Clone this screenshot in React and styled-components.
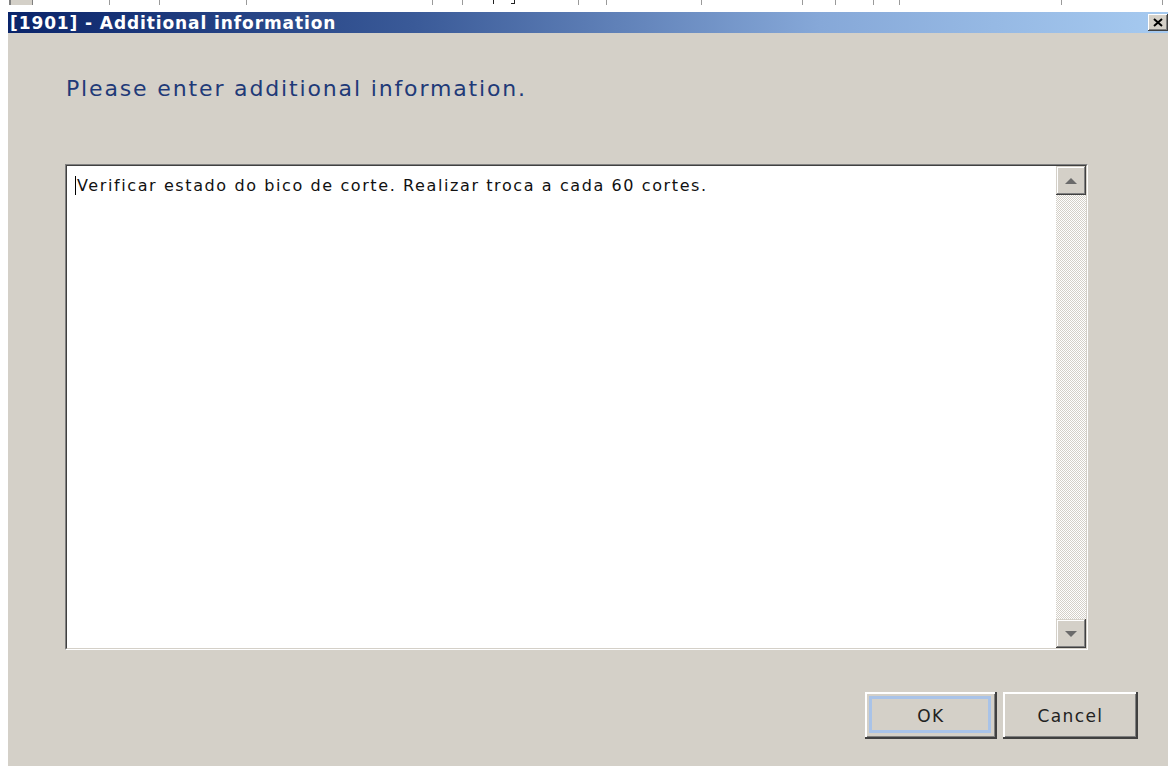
import styled, { createGlobalStyle } from "styled-components";

const GlobalStyle = createGlobalStyle`
  html, body {
    margin: 0;
    padding: 0;
    background: #fff;
    overflow: hidden;
  }
  #root {
    width: 1168px;
    height: 766px;
  }
`;

const Screen = styled.div`
  width: 1168px;
  height: 766px;
  display: flex;
  flex-direction: column;
  background: #fff;
`;

/* strip of the grid behind the dialog */
const GridStrip = styled.div`
  height: 12px;
  flex-shrink: 0;
  display: flex;
`;

const GridCell = styled.div`
  flex: 0 0 ${(p) => p.$w}px;
  height: 5px;
  box-sizing: border-box;
  border-right: ${(p) => (p.$line ? "1px solid #9a9a9a" : "none")};
  display: flex;
  align-items: flex-start;
`;

const GridButton = styled.div`
  flex: 0 0 24px;
  height: 5px;
  box-sizing: border-box;
  background: #d4d0c8;
  border-left: 2px solid #808080;
  border-right: 1px solid #808080;
`;

/* tails of the cell labels peeking out above the dialog */
const Tail = styled.span`
  margin-left: ${(p) => p.$x}px;
  width: ${(p) => p.$w}px;
  height: 4px;
  border-right: 1px solid #222;
  border-bottom: ${(p) => (p.$hook ? "1px solid #222" : "none")};
  box-sizing: border-box;
`;

const Dialog = styled.div`
  flex: 1;
  margin-left: 8px;
  display: flex;
  flex-direction: column;
  background: #d4d0c8;
  min-height: 0;
`;

const TitleBar = styled.div`
  height: 21px;
  flex-shrink: 0;
  display: flex;
  align-items: center;
  justify-content: space-between;
  padding-left: 2px;
  background: linear-gradient(to right, #0a246a 0%, #3a5a98 35%, #86a8d8 70%, #a6caf0 100%);
`;

const Title = styled.span`
  font: bold 17px "DejaVu Sans", sans-serif;
  letter-spacing: 0.9px;
  color: #fff;
  white-space: nowrap;
`;

const CloseButton = styled.div`
  width: 20px;
  height: 17px;
  align-self: flex-start;
  margin-top: 2px;
  background: #d4d0c8;
  box-shadow: inset -1px -1px #404040, inset 1px 1px #fff, inset -2px -2px #808080;
  display: flex;
  align-items: center;
  justify-content: center;
`;

const Body = styled.div`
  flex: 1;
  display: flex;
  flex-direction: column;
  padding: 43px 30px 0 57px;
`;

const Prompt = styled.div`
  margin-left: 1px;
  font: 22px/26px "DejaVu Sans", sans-serif;
  color: #1f3a78;
  letter-spacing: 1.85px;
  white-space: nowrap;
`;

const TextBox = styled.div`
  margin-top: 62px;
  width: 1023px;
  height: 486px;
  box-sizing: border-box;
  border-style: solid;
  border-width: 1px;
  border-color: #808080 #fff #fff #808080;
  display: flex;
`;

const TextInner = styled.div`
  flex: 1;
  display: flex;
  border-style: solid;
  border-width: 1px;
  border-color: #404040 #d4d0c8 #d4d0c8 #404040;
  background: #fff;
`;

const TextArea = styled.div`
  flex: 1;
  padding: 10px 0 0 8px;
  font: 16px/20px "DejaVu Sans", sans-serif;
  letter-spacing: 1.6px;
  color: #111;
  display: flex;
  align-items: flex-start;
  white-space: nowrap;
`;

const Caret = styled.span`
  width: 1px;
  height: 19px;
  margin-right: 1px;
  background: #000;
  flex-shrink: 0;
`;

const ScrollBar = styled.div`
  width: 30px;
  display: flex;
  flex-direction: column;
  background: repeating-conic-gradient(#fff 0 25%, #d4d0c8 0 50%) 0 0 / 2px 2px;
`;

const ScrollTrack = styled.div`
  flex: 1;
`;

const ScrollButton = styled.div`
  height: 29px;
  background: #d4d0c8;
  box-shadow: inset -1px -1px #404040, inset 1px 1px #d4d0c8, inset -2px -2px #808080,
    inset 2px 2px #fff;
  display: flex;
  align-items: center;
  justify-content: center;
`;

const ButtonRow = styled.div`
  margin-top: 42px;
  display: flex;
  justify-content: flex-end;
  gap: 6px;
`;

const Button = styled.div`
  width: ${(p) => p.$w}px;
  height: 47px;
  box-sizing: border-box;
  background: #d4d0c8;
  box-shadow: inset -2px -2px #404040, inset 2px 2px #fff, inset -3px -3px #808080;
  display: flex;
  align-items: center;
  justify-content: center;
  font: 17px "DejaVu Sans", sans-serif;
  letter-spacing: 1.4px;
  color: #222;
  position: relative;

  &::after {
    content: "";
    display: ${(p) => (p.$focused ? "block" : "none")};
    position: absolute;
    inset: 4px 6px 6px 4px;
    border: 3px solid #a9c3e8;
  }
`;

const Arrow = ({ up }) => (
  <svg width="14" height="8" viewBox="0 0 14 8">
    <polygon points={up ? "1,7 13,7 7,1" : "1,1 13,1 7,7"} fill="#6b6b6b" />
  </svg>
);

const gridCells = [110, 160, 247, 433, 463, 579, 607, 702, 803, 836, 874, 900, 1062, 1163];

const App = () => {
  let prev = 33;
  return (
    <Screen>
      <GlobalStyle />
      <GridStrip>
        <GridCell $w={9} />
        <GridButton />
        {gridCells.map((x) => {
          const w = x - prev;
          prev = x;
          return (
            <GridCell key={x} $w={w} $line>
              {x === 579 && (
                <>
                  <Tail $x={29} $w={2} />
                  <Tail $x={17} $w={4} $hook />
                </>
              )}
            </GridCell>
          );
        })}
      </GridStrip>
      <Dialog>
        <TitleBar>
          <Title>[1901] - Additional information</Title>
          <CloseButton>
            <svg width="10" height="9" viewBox="0 0 10 9">
              <path d="M1 1 L9 8 M9 1 L1 8" stroke="#000" strokeWidth="2" />
            </svg>
          </CloseButton>
        </TitleBar>
        <Body>
          <Prompt>Please enter additional information.</Prompt>
          <TextBox>
            <TextInner>
              <TextArea>
                <Caret />
                Verificar estado do bico de corte. Realizar troca a cada 60 cortes.
              </TextArea>
              <ScrollBar>
                <ScrollButton>
                  <Arrow up />
                </ScrollButton>
                <ScrollTrack />
                <ScrollButton>
                  <Arrow />
                </ScrollButton>
              </ScrollBar>
            </TextInner>
          </TextBox>
          <ButtonRow>
            <Button $w={132} $focused>
              OK
            </Button>
            <Button $w={135}>Cancel</Button>
          </ButtonRow>
        </Body>
      </Dialog>
    </Screen>
  );
};

export default App;
